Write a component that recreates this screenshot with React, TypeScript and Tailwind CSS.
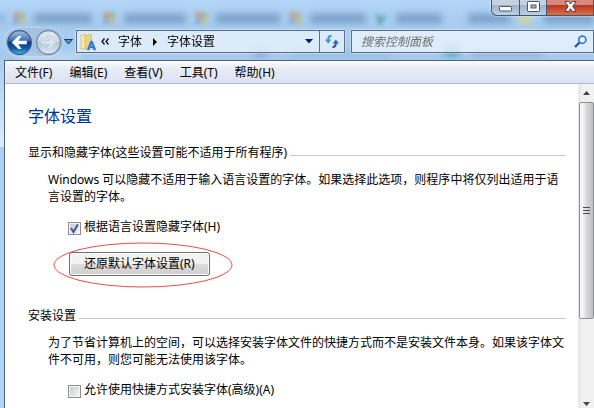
import React, { useState } from "react";

const MENU = ["文件(F)", "编辑(E)", "查看(V)", "工具(T)", "帮助(H)"];

// smudges of the window behind, seen through the glass
const TABS = [
  { x: 0, w: 4, icon: "" },
  { x: 34, w: 58, icon: "#a8b07c" },
  { x: 124, w: 62, icon: "#a9a77c" },
  { x: 216, w: 64, icon: "#a5ad68" },
  { x: 310, w: 56, icon: "#b0aa74" },
  { x: 396, w: 46, icon: "" },
  { x: 468, w: 42, icon: "" },
  { x: 544, w: 50, icon: "" },
];

function GlassBackdrop() {
  return (
    <svg className="absolute inset-0 h-full w-full" aria-hidden="true">
      <defs>
        <filter id="smudge" x="-10%" y="-50%" width="120%" height="200%">
          <feGaussianBlur stdDeviation="3.5" />
        </filter>
        <filter id="icons" x="-10%" y="-50%" width="120%" height="200%">
          <feGaussianBlur stdDeviation="2" />
        </filter>
      </defs>
      <g filter="url(#smudge)">
        {TABS.map((t) => (
          <rect key={t.x} x={t.x} y="14" width={t.w} height="9" fill="#557fa8" opacity="0.6" />
        ))}
        <rect x="254" y="50" width="13" height="6" fill="#6a86d8" opacity="0.7" />
        <rect x="444" y="45" width="16" height="11" fill="#3aa0ac" opacity="0.8" />
        <rect x="472" y="50" width="70" height="6" fill="#6f9cc6" opacity="0.6" />
        <rect x="290" y="50" width="100" height="8" fill="#86b3dd" opacity="0.5" />
        <rect x="20" y="54" width="60" height="6" fill="#d3e8fa" opacity="0.7" />
      </g>
      <g filter="url(#icons)">
        {TABS.filter((t) => t.icon).map((t) => (
          <g key={t.x} opacity="0.7">
            <rect x={t.x - 21} y="12" width="6" height="6" fill="#c98d70" />
            <rect x={t.x - 15} y="12" width="6" height="6" fill={t.icon} />
            <rect x={t.x - 21} y="18" width="6" height="6" fill="#6d9bd6" />
            <rect x={t.x - 15} y="18" width="6" height="6" fill="#c9b867" />
          </g>
        ))}
        <path d="M377 14l3 9l5-8" fill="none" stroke="#2f8f86" strokeWidth="3" opacity="0.7" />
        <rect x="518" y="16" width="14" height="8" fill="#cfd2a0" opacity="0.9" />
      </g>
    </svg>
  );
}

function NavButtons() {
  return (
    <div className="relative flex h-7 w-[58px] shrink-0 items-center justify-between rounded-full bg-[#9fb9d4]/50 px-[2px] shadow-[0_0_2px_#e8f3fd]">
      <button type="button" aria-label="后退" className="h-[25px] w-[25px]">
        <svg viewBox="0 0 24 24" className="h-[25px] w-[25px]">
          <defs>
            <linearGradient id="back" x1="0" y1="0" x2="0" y2="1">
              <stop offset="0" stopColor="#a9c0e4" />
              <stop offset="0.4" stopColor="#4672b8" />
              <stop offset="0.5" stopColor="#0c3a86" />
              <stop offset="0.75" stopColor="#1559ae" />
              <stop offset="1" stopColor="#3fc4f6" />
            </linearGradient>
          </defs>
          <circle cx="12" cy="12" r="11.4" fill="url(#back)" stroke="#3a557f" strokeWidth="1" />
          <path d="M4.500 12L11 5.800h3L10.800 10.300H19v3.400h-8.200L14 18.200h-3z" fill="#fff" />
        </svg>
      </button>
      <button type="button" aria-label="前进" className="h-[25px] w-[25px]">
        <svg viewBox="0 0 24 24" className="h-[25px] w-[25px]">
          <defs>
            <linearGradient id="fwd" x1="0" y1="0" x2="0" y2="1">
              <stop offset="0" stopColor="#e2ebf3" />
              <stop offset="0.45" stopColor="#cddae6" />
              <stop offset="0.5" stopColor="#b4c7da" />
              <stop offset="1" stopColor="#dcebf7" />
            </linearGradient>
          </defs>
          <circle cx="12" cy="12" r="11.4" fill="url(#fwd)" stroke="#6b7f97" strokeWidth="1" />
          <path d="M19.500 12L13 5.800h-3l3.200 4.500H5v3.400h8.200L10 18.200h3z" fill="#d9e4ee" stroke="#b4c5d6" strokeWidth="0.500" />
        </svg>
      </button>
    </div>
  );
}

function FolderIcon() {
  return (
    <svg viewBox="0 0 16 18" className="h-[18px] w-4 shrink-0" aria-hidden="true">
      <path d="M1 2l5-.5v14L1 16z" fill="#f8e9b0" stroke="#d0b566" strokeWidth="0.700" />
      <path d="M5 3l6.500-2v13.500L5 16.500z" fill="#eed37c" stroke="#d0b566" strokeWidth="0.700" />
      <path d="M7 17L10.500 8h2L16 17h-2.500l-.6-2h-3l-.6 2zM10.400 13.500h2l-1-3z" fill="#2d77d6" stroke="#2d77d6" strokeWidth="0.300" />
    </svg>
  );
}

function WindowButtons() {
  return (
    <div className="relative flex h-4 w-[103px] rounded-bl-md border border-t-0 border-[#44566b] shadow-[0_0_2px_#fff]">
      <button type="button" aria-label="最小化" className="flex w-[28px] items-center justify-center rounded-bl-md border-r border-[#44566b] bg-linear-to-b from-[#c4d2e2] from-30% via-[#9db1c8] via-35% to-[#bdd2e8]">
        <svg viewBox="0 0 13 6" className="mt-[3px] h-[6px] w-[13px]">
          <rect x="0.500" y="0.500" width="12" height="4.500" rx="0.800" fill="#fff" stroke="#4a5565" />
        </svg>
      </button>
      <button type="button" aria-label="最大化" className="flex w-[27px] items-center justify-center border-r border-[#44566b] bg-linear-to-b from-[#c4d2e2] from-30% via-[#9db1c8] via-35% to-[#bdd2e8]">
        <svg viewBox="0 0 13 11" className="-mt-[3px] h-[11px] w-[13px]">
          <rect x="0.500" y="0.500" width="12" height="10" rx="0.800" fill="#fff" stroke="#4a5565" />
          <rect x="4" y="4" width="5" height="3" fill="#a9bccf" stroke="#4a5565" />
        </svg>
      </button>
      <button type="button" aria-label="关闭" className="flex flex-1 items-center justify-center bg-linear-to-b from-[#d98a7c] from-30% via-[#bb3420] via-35% to-[#d8714e]">
        <svg viewBox="0 0 13 11" className="-mt-[3px] h-[11px] w-[13px]">
          <path d="M1 .5h3.500l2 2.500l2-2.500H12L8.800 5.300L12 10.500H8.500l-2-2.800l-2 2.800H1l3.200-5.200z" fill="#fff" stroke="#4a4550" strokeWidth="1" />
        </svg>
      </button>
    </div>
  );
}

function AddressBar() {
  return (
    <div className="relative flex h-[23px] w-[269px] shrink items-stretch border border-[#5b7088] bg-[#e9f2fb]/80 shadow-[0_0_2px_#fff]">
      <div className="flex min-w-0 flex-1 items-center pl-[3px]">
        <FolderIcon />
        <svg viewBox="0 0 8 7" className="ml-[5px] h-[7px] w-2" aria-hidden="true">
          <path d="M3.500 .5L1 3.500l2.500 3M7.500 .5L5 3.500l2.500 3" fill="none" stroke="#111" strokeWidth="1.300" />
        </svg>
        <span className="ml-[9px]">字体</span>
        <svg viewBox="0 0 4 8" className="ml-[11px] h-2 w-1" aria-hidden="true">
          <path d="M0 0l4 4l-4 4z" fill="#000" />
        </svg>
        <span className="ml-[10px]">字体设置</span>
      </div>
      <button type="button" aria-label="以前的位置" className="w-5 pl-[6px]">
        <svg viewBox="0 0 8 5" className="h-[5px] w-2">
          <path d="M0 0h8l-4 4.500z" fill="#0b1a66" />
        </svg>
      </button>
      <button type="button" aria-label="刷新" className="flex w-[25px] items-center justify-center border-l border-[#5b7088]">
        <svg viewBox="0 0 14 13" className="h-[13px] w-[14px]">
          <path d="M6.500 1C4 .8 3.200 2 3.200 5" fill="none" stroke="#3f8fd6" strokeWidth="2" />
          <path d="M0 4.500h6.500L3.200 8.500z" fill="#3f8fd6" />
          <path d="M7.500 12c2.500.2 3.300-1 3.300-4" fill="none" stroke="#27509e" strokeWidth="2" />
          <path d="M7.500 8.500H14L10.800 4.500z" fill="#3468b8" />
        </svg>
      </button>
    </div>
  );
}

function GroupTitle({ children }: { children: React.ReactNode }) {
  return (
    <div className="flex items-center gap-[3px]">
      <h2 className="shrink-0 leading-[18px]">{children}</h2>
      <span className="mt-1 h-px flex-1 bg-[#c8c8c8]" />
    </div>
  );
}

function CheckOption({ label, checked, onChange }: { label: string; checked: boolean; onChange: (v: boolean) => void }) {
  return (
    <label className="flex w-fit items-center gap-[3px] leading-[18px]">
      <span className="relative mt-[3px] flex h-[13px] w-[13px]">
        <input type="checkbox" checked={checked} onChange={(e) => onChange(e.target.checked)}
          className="h-[13px] w-[13px] appearance-none border border-[#8e8f8f] bg-linear-to-br from-[#c4c9cf] to-[#f8f8f8] shadow-[inset_0_0_0_1px_#f4f4f4]" />
        {checked && (
          <svg viewBox="0 0 13 13" className="pointer-events-none absolute inset-0 h-[13px] w-[13px]">
            <path d="M3 6l2.500 4L9.800 2.500" fill="none" stroke="#3b5a9f" strokeWidth="2" />
          </svg>
        )}
      </span>
      {label}
    </label>
  );
}

function ScrollBar() {
  return (
    <div className="flex w-4 shrink-0 flex-col items-center bg-linear-to-r from-[#e6e6e6] to-[#f1f1f1] to-30%" aria-hidden="true">
      <svg viewBox="0 0 7 4" className="mt-[7px] mb-[7px] h-1 w-[7px] shrink-0">
        <path d="M0 4l3.500-4L7 4z" fill="#444" />
      </svg>
      <div className="flex h-[217px] w-[15px] shrink-0 flex-col items-center justify-center gap-[2px] rounded-[2px] border border-[#8f9095] bg-linear-to-r from-[#f5f5f5] from-20% via-[#dadadd] via-50% to-[#bdbec6]">
        <span className="h-px w-[7px] bg-[#4c4c50]" />
        <span className="h-px w-[7px] bg-[#4c4c50]" />
        <span className="h-px w-[7px] bg-[#4c4c50]" />
      </div>
      <svg viewBox="0 0 7 4" className="mt-auto mb-[2px] h-1 w-[7px] shrink-0">
        <path d="M0 0l3.500 4L7 0z" fill="#444" />
      </svg>
    </div>
  );
}

export default function App() {
  const [hideFonts, setHideFonts] = useState(true);
  const [allowShortcut, setAllowShortcut] = useState(false);

  return (
    <div className="flex h-screen flex-col overflow-hidden bg-[#b3d5fd] font-['Noto_Sans','Noto_Sans_CJK_SC',sans-serif] text-xs text-black">
      {/* Glass title area */}
      <header className="relative shrink-0 bg-linear-to-b from-[#b4d6f8] via-[#a8cdf0] via-40% to-[#a6caec]">
        <GlassBackdrop />
        <div className="flex h-7 justify-end">
          <WindowButtons />
        </div>
        <div className="flex h-8 items-start pt-[2px] pl-[5px]">
          <div className="-mt-[2px] flex items-center">
            <NavButtons />
            <button type="button" aria-label="最近浏览的位置" className="relative mr-[3px] flex w-[10px] justify-end">
              <svg viewBox="0 0 9 6" className="h-[6px] w-[9px]">
                <path d="M.5 .5h8l-4 4.500z" fill="#3aa0dc" stroke="#16375f" strokeWidth="1" />
              </svg>
            </button>
          </div>
          <div className="flex min-w-0 flex-1 gap-[6px]">
            <AddressBar />
            <div className="relative flex h-[23px] min-w-0 flex-1 items-center border border-[#5b7088] bg-[#edf5fc]/80 pr-[6px] pl-[9px] shadow-[0_0_2px_#fff]">
              <input type="search" aria-label="搜索控制面板" placeholder="搜索控制面板"
                className="min-w-0 flex-1 bg-transparent italic outline-none placeholder:text-[#6d6d6d]" />
              <svg viewBox="0 0 13 13" className="h-[13px] w-[13px] shrink-0" aria-hidden="true">
                <path d="M1 12l4.500-4.500" stroke="#2b50a8" strokeWidth="2.400" />
                <circle cx="8.300" cy="4.700" r="3.600" fill="#e9f4fd" stroke="#2f7ccc" strokeWidth="1.700" />
              </svg>
            </div>
          </div>
        </div>
      </header>

      <div className="flex min-h-0 flex-1">
        {/* left window edge, with the glass highlight above */}
        <div className="w-1 shrink-0 bg-linear-to-b from-[#a9cdf2] to-[#b3d5fd]">
          <div className="h-[87px] bg-linear-to-b from-[#a9cdf2] to-[#dcecfc]" />
        </div>
        <div className="flex min-w-0 flex-1 flex-col border-t border-l border-[#4e6378] bg-white">
          <nav className="flex h-[23px] shrink-0 items-center gap-[17px] border-b border-[#b4bcd2] bg-linear-to-b from-[#fbfcfe] via-[#e8ecf6] via-35% to-[#dce1f3] pt-px pl-[10px]">
            {MENU.map((m) => (
              <button key={m} type="button">{m}</button>
            ))}
          </nav>

          <div className="flex min-h-0 flex-1">
            <main className="min-w-0 flex-1 pr-3 pl-[23px]">
              <h1 className="pt-5 text-base leading-6 text-[#003399]">字体设置</h1>

              <section className="pt-4">
                <GroupTitle>显示和隐藏字体(这些设置可能不适用于所有程序)</GroupTitle>
                <div className="pl-5">
                  <p className="pt-[9px] leading-[17px]">
                    Windows 可以隐藏不适用于输入语言设置的字体。如果选择此选项，则程序中将仅列出适用于语言设置的字体。
                  </p>
                  <div className="pt-[13px] pl-5">
                    <CheckOption label="根据语言设置隐藏字体(H)" checked={hideFonts} onChange={setHideFonts} />
                    <div className="relative mt-4 ml-px w-fit">
                      <button type="button" className="h-6 rounded-[3px] border border-[#707070] bg-linear-to-b from-[#f2f2f2] from-50% via-[#dddddd] via-50% to-[#cfcfcf] px-[14px] shadow-[inset_0_0_0_1px_#fcfcfc]">
                        还原默认字体设置(R)
                      </button>
                      {/* red marker round the button */}
                      <svg viewBox="0 0 180 46" className="pointer-events-none absolute -top-[10px] -left-4 h-[46px] w-[180px]" aria-hidden="true">
                        <ellipse cx="90" cy="23" rx="89" ry="22" fill="none" stroke="#f04a4a" strokeWidth="1" />
                      </svg>
                    </div>
                  </div>
                </div>
              </section>

              <section className="pt-[31px]">
                <GroupTitle>安装设置</GroupTitle>
                <div className="pl-5">
                  <p className="pt-[9px] leading-[17px]">
                    为了节省计算机上的空间，可以选择安装字体文件的快捷方式而不是安装文件本身。如果该字体文件不可用，则您可能无法使用该字体。
                  </p>
                  <div className="pt-[13px] pl-5">
                    <CheckOption label="允许使用快捷方式安装字体(高级)(A)" checked={allowShortcut} onChange={setAllowShortcut} />
                  </div>
                </div>
              </section>
            </main>
            <ScrollBar />
          </div>
        </div>
      </div>
    </div>
  );
}
